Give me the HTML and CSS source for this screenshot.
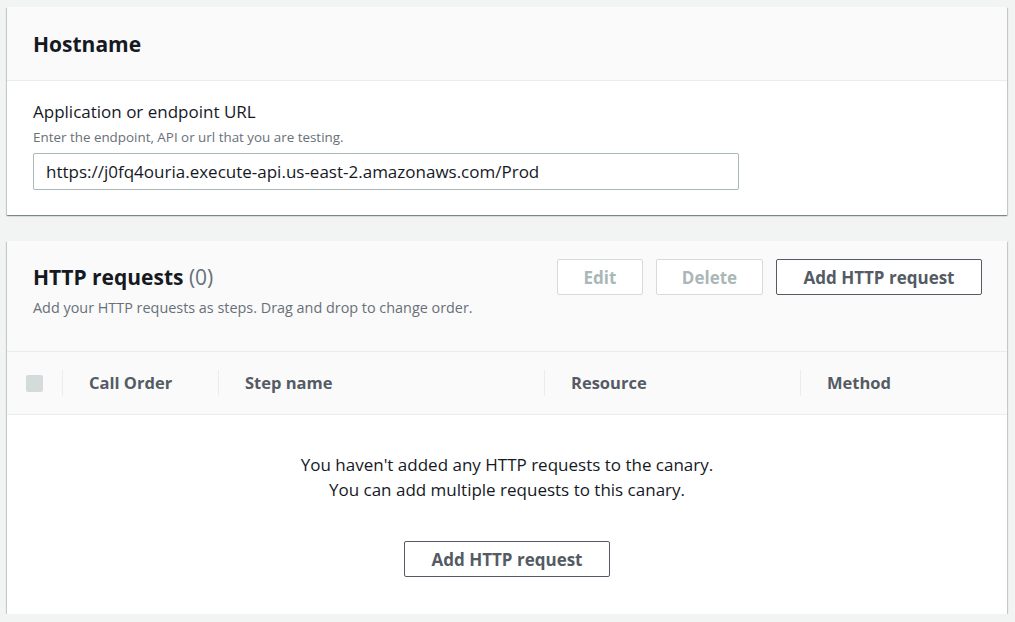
FILE: index.html
```html
<!DOCTYPE html>
<html lang="en">
<head>
<meta charset="utf-8">
<title>Canary HTTP steps</title>
<link rel="stylesheet" href="styles.css">
</head>
<body>
<main class="page">
  <section class="card">
    <header class="card-header">
      <h2 class="card-title">Hostname</h2>
    </header>
    <div class="card-body">
      <label class="field-label" for="url">Application or endpoint URL</label>
      <div class="field-desc">Enter the endpoint, API or url that you are testing.</div>
      <input id="url" class="text-input" type="text" value="https://j0fq4ouria.execute-api.us-east-2.amazonaws.com/Prod">
    </div>
  </section>

  <section class="card">
    <header class="card-header table-head">
      <div class="head-text">
        <h2 class="card-title">HTTP requests <span class="count">(0)</span></h2>
        <div class="head-desc">Add your HTTP requests as steps. Drag and drop to change order.</div>
      </div>
      <div class="actions">
        <button class="btn btn-edit" disabled>Edit</button>
        <button class="btn btn-delete" disabled>Delete</button>
        <button class="btn btn-add">Add HTTP request</button>
      </div>
    </header>
    <div class="table-columns">
      <div class="col col-check"><span class="checkbox"></span></div>
      <div class="col col-order">Call Order</div>
      <div class="col col-step">Step name</div>
      <div class="col col-resource">Resource</div>
      <div class="col col-method">Method</div>
    </div>
    <div class="empty">
      <p class="empty-text">You haven't added any HTTP requests to the canary.<br>You can add multiple requests to this canary.</p>
      <button class="btn btn-add btn-empty">Add HTTP request</button>
    </div>
  </section>
</main>
</body>
</html>
```

FILE: styles.css
```css
* { box-sizing: border-box; }
html, body { margin: 0; padding: 0; }
body {
  background: #f2f3f3;
  font-family: "Open Sans", "Liberation Sans", Arial, sans-serif;
  color: #16191f;
}
.page {
  padding: 7px 8px 0 7px;
  display: flex;
  flex-direction: column;
  gap: 26px;
}
.card {
  background: #fff;
  box-shadow: 0 1px 1px 0 rgba(0,28,36,.3), 1px 1px 1px 0 rgba(0,28,36,.15), -1px 1px 1px 0 rgba(0,28,36,.15);
}
.card-header {
  background: #fafafa;
  border-bottom: 1px solid #eaeded;
  padding: 0 25px 0 26px;
  height: 74px;
  display: flex;
  align-items: center;
}
.card-title {
  margin: 0;
  font-size: 21px;
  font-weight: 700;
  line-height: 26px;
  color: #16191f;
}
.count { font-weight: 400; color: #687078; }
.card-body {
  padding: 19px 25px 25px 26px;
}
.field-label {
  display: block;
  font-size: 17px;
  line-height: 24px;
  color: #16191f;
}
.field-desc {
  margin-top: 3px;
  font-size: 13.4px;
  line-height: 20px;
  color: #687078;
  margin-bottom: 6px;
}
.text-input {
  display: block;
  width: 706px;
  height: 37px;
  border: 1px solid #aab7b8;
  border-radius: 2px;
  padding: 0 12px;
  font-family: inherit;
  font-size: 17px;
  color: #16191f;
  background: #fff;
}
.table-head {
  height: 111px;
  align-items: flex-start;
  justify-content: space-between;
  padding-top: 18px;
}
.head-text { padding-top: 5px; }
.head-desc {
  margin-top: 8px;
  font-size: 14.4px;
  line-height: 20px;
  color: #687078;
}
.actions {
  display: flex;
  gap: 13px;
}
.btn {
  height: 36px;
  border-radius: 2px;
  background: #fff;
  font-family: inherit;
  font-size: 17px;
  font-weight: 700;
  padding: 0;
  cursor: pointer;
}
.btn:disabled { border: 1px solid #d5dbdb; color: #aab7b8; cursor: default; }
.btn-edit { width: 86px; }
.btn-delete { width: 107px; }
.btn-add { width: 206px; border: 1px solid #545b64; color: #545b64; }
.table-columns {
  display: flex;
  align-items: center;
  height: 63px;
  background: #fafafa;
  border-bottom: 1px solid #eaeded;
  font-size: 16.5px;
  font-weight: 700;
  color: #545b64;
}
.col {
  height: 26px;
  line-height: 26px;
  padding-left: 26px;
  border-left: 1px solid #eaeded;
}
.col-check { width: 55px; border-left: none; padding-left: 19px; display: flex; align-items: center; }
.checkbox { width: 17px; height: 17px; background: #d5dbdb; border-radius: 2px; }
.col-order { width: 156px; }
.col-step { width: 326px; }
.col-resource { width: 256px; }
.col-method { flex: 1; }
.empty {
  display: flex;
  flex-direction: column;
  align-items: center;
  padding: 37px 0 37px;
}
.empty-text {
  margin: 0 0 39px;
  text-align: center;
  font-size: 17px;
  line-height: 25px;
  color: #16191f;
}
.btn-empty { display: block; }
```
